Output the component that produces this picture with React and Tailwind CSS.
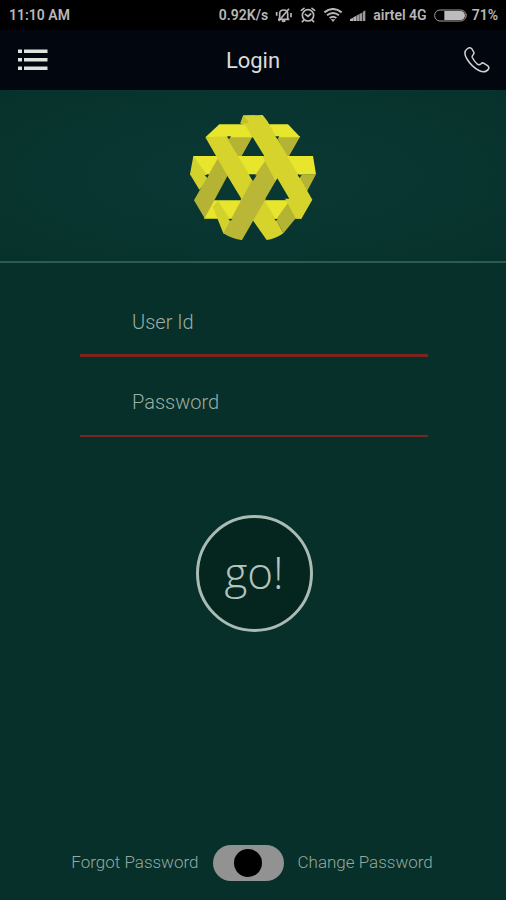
import React from "react";

function MutedBell() {
  return (
    <svg viewBox="0 0 54 48" className="h-4 w-[18px]" fill="none" stroke="#b8b8b8" strokeWidth="5" strokeLinejoin="round" aria-hidden="true">
      <path d="M14 36V20c0-8 6-11 12-11s12 3 12 11v16M9 37h34M21 41q5 4 10 0" />
      <path d="M42 5L11 42" />
      <path d="M5 15v11M48 18v13" />
    </svg>
  );
}

function AlarmClock() {
  return (
    <svg viewBox="0 0 48 48" className="size-4" fill="none" stroke="#b8b8b8" strokeWidth="5" strokeLinecap="round" aria-hidden="true">
      <circle cx="24" cy="25" r="17" />
      <path d="M16 22l8 6 8-7M4 10l8-6M36 4l8 6M11 40l-4 4M37 40l4 4" />
    </svg>
  );
}

function Wifi() {
  return (
    <svg viewBox="0 0 60 42" className="h-[14px] w-5" fill="none" stroke="#b8b8b8" strokeWidth="6" aria-hidden="true">
      <path d="M4 13q26-20 52 0M12 22q18-14 36 0M20 30q10-8 20 0" />
      <path d="M23 34h14l-7 8z" fill="#b8b8b8" stroke="none" />
    </svg>
  );
}

function Signal() {
  return (
    <svg viewBox="0 0 48 36" className="h-3 w-4" aria-hidden="true">
      <path d="M0 36v-5l9-5v10zM10 36V25l8-4v15z" fill="#b8b8b8" />
      <path d="M19 36V20l8-4v20zM28 36V15l8-4v25zM38 36V9l8-5v32z" fill="#9c9c9c" />
    </svg>
  );
}

function Battery() {
  return (
    <svg viewBox="0 0 102 39" className="h-[13px] w-[34px]" aria-hidden="true">
      <rect x="2" y="3" width="94" height="33" rx="16" fill="none" stroke="#a0a0a0" strokeWidth="3" />
      <path d="M31 6h49a13 13.500 0 0 1 0 27H31z" fill="#bcbcbc" />
      <path d="M97 13q4 6 0 13z" fill="#a0a0a0" />
    </svg>
  );
}

function Logo() {
  return (
    <svg viewBox="0 0 438 435" className="h-[145px] w-[146px]" role="img" aria-label="Woven ribbon emblem">
      <g fill="#b5b333">
        <path d="M138 94H218L170 184zM290 94H361L322 162z" />
        <path d="M358 208H408L374 272L340 245z" />
      </g>
      <g fill="#e8e52d">
        <path d="M76 97L118 58H324L361 97z" />
        <path d="M40 153H399L408 208H40z" />
        <path d="M92 286H192L164 341H72zM250 286H386L364 341H250z" />
      </g>
      <path d="M40 153L30 208L58 254L90 222z" fill="#d3d12b" />
      <path d="M114 287L98 305L130 385L186 405L150 343z" fill="#d3d12b" />
      <path d="M113 161H170L74 340L42 286z" fill="#b5b333" />
      <path d="M76 97L138 94L255 288L288 343L310 385Q286 402 260 405L218 345z" fill="#d6d42c" />
      <path d="M288 343L330 284L352 315L346 341L310 385z" fill="#b5b333" />
      <path d="M255 287H328L288 343z" fill="#e8e52d" />
      <path d="M260 161L292 222L186 405Q156 402 130 385L220 218z" fill="#b9b735" />
      <path d="M181 55L190 31L248 30L262 48L397 284L364 341L346 338L197 62z" fill="#d6d42c" />
      <path d="M190 31L208 55H181z" fill="#c2c02f" />
      <g fill="#083832">
        <path d="M218 96L253 153H185zM146 220L184 281H111zM292 220L328 281H256z" />
        <path d="M208 211H230L219 228z" />
        <path d="M141 94h12l-6 9zM286 94h12l-6 9zM74 210h12l-4 9zM353 210h12l-6 9zM145 342h12l-6 6zM283 342h10l-5 6z" />
      </g>
    </svg>
  );
}

function StatusBar() {
  return (
    <div className="flex h-[30px] items-center justify-between bg-black pl-[9px] pr-2 font-['Roboto',sans-serif] text-sm font-semibold text-[#b8b8b8]">
      <span>11:10 AM</span>
      <div className="flex items-center gap-[7px]">
        <span>0.92K/s</span>
        <MutedBell />
        <AlarmClock />
        <Wifi />
        <Signal />
        <span>airtel 4G</span>
        <div className="flex items-center gap-1">
          <Battery />
          <span>71%</span>
        </div>
      </div>
    </div>
  );
}

function Header() {
  return (
    <header className="grid h-[60px] grid-cols-[1fr_auto_1fr] items-center bg-[#02060f] px-4">
      <button type="button" aria-label="Menu" className="justify-self-start">
        <svg viewBox="0 0 32 24" className="h-6 w-8" fill="#dfe3e0" aria-hidden="true">
          <path d="M2 1.500h4v3.500H2zM8 1.500h23.500v3.500H8zM2 10h4v3.500H2zM8 10h23.500v3.500H8zM2 18.500h4V22H2zM8 18.500h23.500V22H8z" />
        </svg>
      </button>
      <h1 className="text-[22px] text-[#dadcda]">Login</h1>
      <a href="#call" aria-label="Call" className="justify-self-end">
        <svg viewBox="0 0 26 26" className="size-[26px]" fill="none" stroke="#d0d0d0" strokeWidth="1.500" strokeLinejoin="round" aria-hidden="true">
          <path d="M3 2C.500 4 .500 8 3 12c3 5 7 9 12 11.500 4 2 7.500 1.500 9.500-1.500 1-1.500 0-2.500-1-3.300l-3.500-2.400c-1.200-.800-2-.600-3 .500-1.400 1.400-2.300 1.400-3.600.400C11 15 9.500 13 8.300 10.500c-.500-1.200 0-2 1-3 .800-.800.900-1.700.300-2.700L8 2C6.500.300 4.600.600 3 2z" />
        </svg>
      </a>
    </header>
  );
}

function Field({ id, label, type, line }) {
  return (
    <input
      id={id}
      type={type}
      placeholder={label}
      aria-label={label}
      className={`block h-20 w-full bg-transparent pl-[52px] pt-3 text-xl font-light text-[#c5d2cd] outline-none placeholder:text-[#9aaea6] placeholder:opacity-100 ${line}`}
    />
  );
}

export default function App() {
  return (
    <div className="flex min-h-screen flex-col bg-[#063029] font-['Roboto',sans-serif]">
      <StatusBar />
      <Header />
      <div className="flex justify-center border-b-2 border-[#2b5c50] bg-[radial-gradient(ellipse_at_center,#0b3835,#07322b)] pt-[15px] pb-[11px]">
        <Logo />
      </div>
      <form className="flex flex-1 flex-col items-center pl-20 pr-[78px] pt-[14px]" onSubmit={(e) => e.preventDefault()}>
        <div className="w-full">
          <Field id="user" label="User Id" type="text" line="border-b-3 border-[#7d241f]" />
          <Field id="password" label="Password" type="password" line="border-b-2 border-[#7d241f]" />
        </div>
        <button type="submit" className="mt-[78px] flex size-[117px] items-center justify-center rounded-full border-3 border-[#a9bbb4] bg-[#04261f] pb-1 font-['Open_Sans',sans-serif] text-[44px] font-light text-[#b4c3bd]">
          go!
        </button>
      </form>
      <div className="flex items-center justify-center gap-[14px] pr-[10px] pb-[19px] text-[17px] font-light text-[#94a9a1]">
        <a href="#forgot" className="flex-1 text-right">Forgot Password</a>
        <label className="flex h-9 w-[71px] shrink-0 items-center justify-center rounded-full bg-[#929292]">
          <input type="checkbox" role="switch" aria-label="Forgot or change password" className="size-7 appearance-none rounded-full bg-black" />
        </label>
        <a href="#change" className="flex-1">Change Password</a>
      </div>
    </div>
  );
}
